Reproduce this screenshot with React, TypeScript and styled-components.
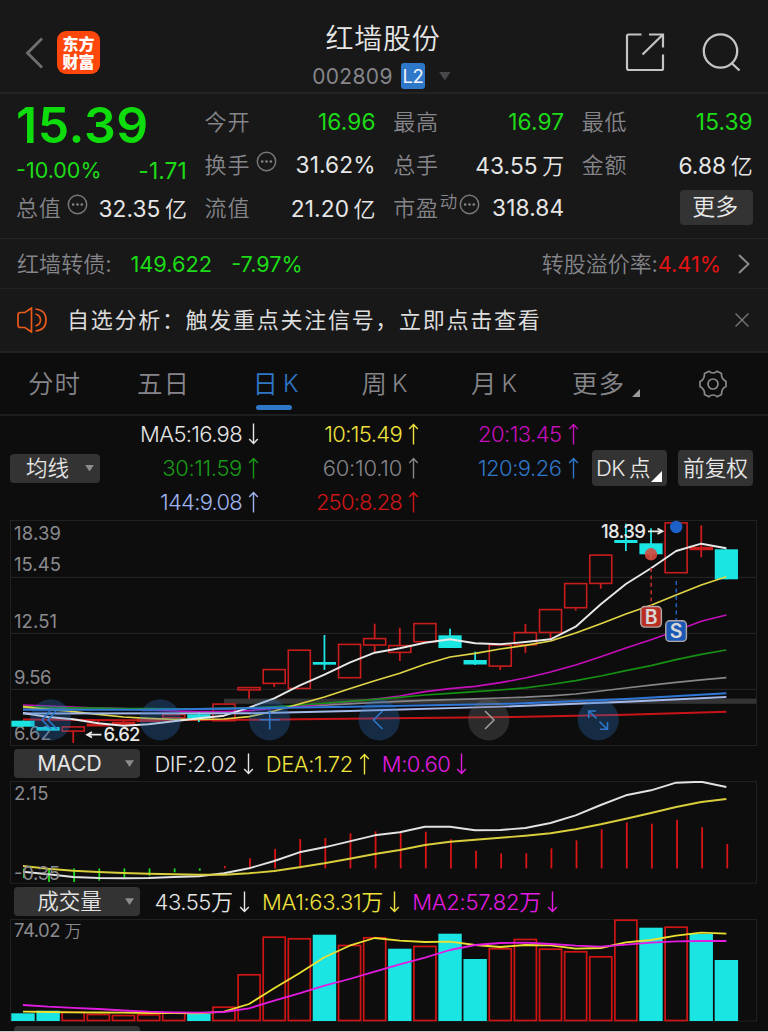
import React from "react";
import styled, { createGlobalStyle } from "styled-components";

const GlobalStyle = createGlobalStyle`
  * { box-sizing: border-box; }
  body {
    margin: 0;
    background: #0d0d0d;
    font-family: Inter, "Noto Sans CJK SC", sans-serif;
    -webkit-font-smoothing: antialiased;
  }
`;

const c = {
  panel: "#181818",
  ink: "#0d0d0d",
  line: "#262626",
  green: "#1ddb17",
  white: "#e6e6e6",
  label: "#85858a",
  blue: "#2f77c8",
  red: "#e31414",
  yellow: "#efe23c",
  magenta: "#c40fba",
  pink: "#e31be0",
  cyan: "#1ae5e3",
  chip: "#333333",
};

const Screen = styled.main`
  display: flex;
  flex-direction: column;
  width: 768px;
  height: 1032px;
  overflow: hidden;
  background: ${c.ink};
  border-bottom: 1px solid #cfc8ca;
  white-space: nowrap;
`;

const Txt = styled.span<{ $c?: string; $s?: number; $ls?: number; $w?: number }>`
  color: ${(p) => p.$c ?? c.white};
  font-family: Inter, "Noto Sans CJK SC", sans-serif;
  font-size: ${(p) => p.$s ?? 22}px;
  letter-spacing: ${(p) => p.$ls ?? 0}px;
  font-weight: ${(p) => p.$w ?? 375};
`;

const Cjk = styled(Txt)`
  display: inline-block;
  font-family: "Noto Sans CJK SC", sans-serif;
  font-weight: ${(p) => p.$w ?? 350};
  transform: translateY(-2px);
`;

/* header */
const Header = styled.header`
  display: grid;
  grid-template-columns: 200px 1fr 200px;
  height: 94px;
  flex: none;
  background: ${c.panel};
  border-bottom: 2px solid #232323;
`;
const HeaderLeft = styled.div`
  display: flex;
  align-items: flex-start;
  padding: 31px 0 0 25px;
  gap: 13px;
  svg { margin-top: 6px; }
`;
const Logo = styled.div`
  width: 43px;
  height: 43px;
  padding: 3px 5px 0 5.5px;
  border-radius: 9px;
  background: #ff470c;
  color: #fff;
  font: 800 16px/18px "Noto Sans CJK SC", sans-serif;
  white-space: normal;
`;
const TitleBlock = styled.div`
  display: flex;
  flex-direction: column;
  align-items: center;
  padding: 18px 2px 0 0;
`;
const Title = styled(Cjk)`
  line-height: 42px;
`;
const CodeRow = styled.div`
  display: flex;
  align-items: center;
  height: 32px;
`;
const Level = styled.span`
  width: 24px;
  height: 26px;
  margin: 0 14px 0 8px;
  border-radius: 3px;
  background: ${c.blue};
  color: #f0f4fa;
  font-size: 18.5px;
  line-height: 26px;
  text-align: center;
  letter-spacing: -0.5px;
`;
const CodeInner = styled(CodeRow)`
  margin-right: 3px;
`;
const HeaderRight = styled.div`
  display: flex;
  align-items: flex-start;
  justify-content: flex-end;
  gap: 37px;
  padding: 32px 27px 0 0;
`;

/* quote */
const Quote = styled.section`
  display: grid;
  grid-template-columns: repeat(4, 171px);
  column-gap: 17.6px;
  height: 145px;
  flex: none;
  padding: 7px 0 0 16px;
  background: ${c.panel};
  border-bottom: 1px solid ${c.line};
`;
const QuoteCol = styled.div`
  display: flex;
  flex-direction: column;
`;
const Cell = styled.div`
  display: flex;
  justify-content: space-between;
  align-items: center;
  height: 43px;
  line-height: 43px;
`;
const LabelGroup = styled.span`
  display: flex;
  align-items: center;
  gap: 5.5px;
  svg { margin-bottom: 8px; }
`;
const Super = styled(Cjk)`
  line-height: 30px;
  margin: 0 -3.5px 12px -4.5px;
`;
const Price = styled.div`
  height: 48px;
  line-height: 49px;
  color: #0fdc0c;
  font-size: 50px;
  font-weight: 560;
  letter-spacing: 0.6px;
`;
const ChangeRow = styled(Cell)`
  height: 38px;
  padding-top: 5px;
`;
const MoreButton = styled.button`
  width: 73px;
  height: 35px;
  margin-left: auto;
  padding: 0 2px 0 0;
  border: 0;
  border-radius: 4px;
  background: ${c.chip};
  color: #e8e8e8;
  font: 350 23px/30px "Noto Sans CJK SC", sans-serif;
  span { display: block; height: 35px; }
`;
const MoreCell = styled(Cell)`
  align-items: flex-start;
  padding-top: 3px;
`;

/* strips */
const Strip = styled.section<{ $h: number; $b?: number }>`
  display: flex;
  align-items: center;
  flex: none;
  height: ${(p) => p.$h}px;
  padding: 0 17px;
  background: ${c.panel};
  border-bottom: ${(p) => p.$b ?? 1}px solid #222;
`;
const Push = styled.span`
  display: flex;
  align-items: center;
  margin-left: auto;
`;
const BondValue = styled(Txt)`
  margin-left: 19px;
`;

/* tabs */
const Tabs = styled.nav`
  display: flex;
  flex: none;
  height: 63px;
  border-bottom: 2px solid #1e1e1e;
`;
const Tab = styled.div<{ $w: number; $active?: boolean }>`
  position: relative;
  width: ${(p) => p.$w}px;
  padding-bottom: 4px;
  display: flex;
  align-items: center;
  justify-content: center;
  gap: 4px;
  color: ${(p) => (p.$active ? c.blue : c.label)};
  font: 350 25.5px/57px "Noto Sans CJK SC", sans-serif;
  letter-spacing: 1px;
  svg { margin-top: 4px; }
  &::after {
    content: "";
    display: ${(p) => (p.$active ? "block" : "none")};
    position: absolute;
    left: calc(50% - 19.5px);
    bottom: 4px;
    width: 36px;
    height: 5px;
    border-radius: 2.5px;
    background: ${c.blue};
  }
`;
const TabLatin = styled.span`
  margin-top: 4px;
  font: 350 24px Inter, sans-serif;
  letter-spacing: 0;
`;
const Corner = styled.i<{ $s: number; $c: string }>`
  width: ${(p) => p.$s}px;
  height: ${(p) => p.$s}px;
  background: ${(p) => p.$c};
  clip-path: polygon(100% 0, 100% 100%, 0 100%);
`;
const TabCorner = styled(Corner)`
  margin: 23px 0 0 3px;
`;

/* moving average legend */
const Legend = styled.section`
  display: flex;
  align-items: center;
  flex: none;
  height: 104px;
  padding: 0 15px 0 10px;
`;
const Picker = styled.div<{ $w: number }>`
  display: flex;
  align-items: center;
  width: ${(p) => p.$w}px;
  height: 29px;
  padding-right: 6px;
  border-radius: 4px;
  background: ${c.chip};
  span { flex: 1; text-align: center; line-height: 29px; }
`;
const Down = styled.i<{ $w: number; $c: string }>`
  width: ${(p) => p.$w}px;
  height: ${(p) => p.$w * 0.75}px;
  background: ${(p) => p.$c};
  clip-path: polygon(0 0, 100% 0, 50% 100%);
`;
const Averages = styled.div`
  display: grid;
  grid-template-columns: 159px 160px 159.5px;
  grid-auto-rows: 34px;
  align-items: center;
  justify-items: end;
  height: 102px;
`;
const Reading = styled.span<{ $c: string }>`
  display: flex;
  align-items: center;
  gap: 6px;
  color: ${(p) => p.$c};
`;
const Actions = styled.div`
  display: flex;
  gap: 11px;
  margin-left: auto;
`;
const Action = styled.button`
  position: relative;
  display: flex;
  align-items: center;
  justify-content: center;
  gap: 4px;
  width: 75px;
  height: 36px;
  padding: 0;
  border: 0;
  border-radius: 4px;
  background: ${c.chip};
`;
const ToggleAction = styled(Action)`
  justify-content: flex-start;
  padding-left: 4px;
  i { position: absolute; right: 5px; bottom: 4px; }
`;

const IndicatorBar = styled.div<{ $h: number }>`
  display: flex;
  align-items: center;
  flex: none;
  height: ${(p) => p.$h}px;
  padding-left: 14px;
`;
const Readings = styled.div`
  display: flex;
  align-items: center;
  gap: 12px;
  margin-left: 14.5px;
`;
const Canvas = styled.svg`
  display: block;
  flex: none;
`;
const PeekBar = styled.div`
  display: flex;
  flex: none;
  height: 10px;
  padding: 4px 0 0 14px;
  &::before {
    content: "";
    width: 126px;
    height: 6px;
    border-radius: 4px 4px 0 0;
    background: ${c.chip};
  }
`;

const Dots = () => (
  <svg width="21" height="21" viewBox="0 0 21 21" fill="none" stroke="#77777b">
    <circle cx="10.5" cy="10.5" r="9.2" strokeWidth="1.5" />
    <g fill="#85858a" stroke="none">
      <circle cx="6.2" cy="10.5" r="1.3" />
      <circle cx="10.5" cy="10.5" r="1.3" />
      <circle cx="14.8" cy="10.5" r="1.3" />
    </g>
  </svg>
);

const Arrow = ({ up }: { up?: boolean }) => (
  <svg width="11" height="22" viewBox="0 0 11 22" fill="none" stroke="currentColor" strokeWidth="1.4">
    <path d={up ? "M5.5 21.5V1.500M1.200 6L5.500 1.500L9.800 6" : "M5.5 0.500V20.500M1.200 16L5.500 20.500L9.800 16"} />
  </svg>
);

const ValueUnit = styled(Cjk)`
  line-height: 24px;
  transform: translateY(-0.5px);
`;

type ValueProps = { color: string; up?: boolean; ls?: number; unit?: string; children: React.ReactNode };
const Value = ({ color, up, ls, unit, children }: ValueProps) => (
  <Reading $c={color}>
    <span>
      <Txt $c={color} $s={22} $ls={ls ?? -0.65} $w={350}>{children}</Txt>
      {unit && <ValueUnit $c={color} $s={22}>{unit}</ValueUnit>}
    </span>
    <Arrow up={up} />
  </Reading>
);

/* chart data, one entry per trading day */
const STEP = 25.12;
const dayX = (i: number) => 23 + STEP * i;

type Candle = [up: boolean, top: number, bottom: number, high: number, low: number];
const candles: Candle[] = [
  [false, 720.7, 726.7, 720.7, 726.7],
  [false, 727, 730.7, 727, 730.7],
  [true, 726.3, 731.7, 726.3, 743],
  [true, 723.7, 726.3, 721, 726.3],
  [true, 722, 725, 720.7, 725],
  [true, 719, 721.7, 719, 721.7],
  [true, 714, 718.3, 714, 718.3],
  [false, 714.3, 718.3, 711.7, 722],
  [true, 703.5, 721.3, 703.5, 721.3],
  [true, 687, 690.5, 687, 698.7],
  [true, 669, 684, 669, 687],
  [true, 649.6, 689, 649.6, 689],
  [false, 662, 664.7, 635, 670],
  [true, 643.8, 678.3, 643.8, 678.3],
  [true, 638, 645.6, 623.7, 652],
  [true, 645, 653, 627.7, 661],
  [true, 623, 642.3, 623, 642.3],
  [false, 635.3, 648, 628.7, 648],
  [false, 660, 664.5, 651.7, 665],
  [true, 644.4, 666.7, 644.4, 670],
  [true, 632, 645.5, 624, 653],
  [true, 609, 633, 609, 638.3],
  [true, 583, 608.3, 583, 610.7],
  [true, 554.5, 584, 554.5, 588.7],
  [false, 540, 543, 523.7, 551],
  [false, 543.3, 554.3, 528.3, 559],
  [true, 522.3, 573.3, 522.3, 573.3],
  [true, 547, 550, 525.3, 557.3],
  [false, 549.3, 579.3, 549.3, 579.3],
];

const ma5 = [713, 717, 719.3, 723.3, 725.7, 724.3, 721.3, 718.3, 715.7, 707.7, 698.3, 685.7, 674.7, 662.7, 652.7, 648.3, 642.7, 639.3, 643.3, 644.3, 642, 639.3, 626.7, 604.3, 584, 568.3, 551, 543.7, 548.3];
const ma10 = [706.7, 709.3, 711.7, 714.3, 717, 718.3, 719.3, 719.3, 719, 716.7, 711, 704, 697, 688.7, 680.7, 673.3, 664.3, 657, 653.3, 649, 645.3, 641, 633, 623.7, 614, 605.3, 595, 585, 576.7];
const ma20 = [705, 706, 707, 708, 708.7, 710, 711, 711.7, 711.7, 710.7, 708.3, 706.3, 704, 701.7, 699, 696, 691.7, 688.7, 686.3, 682.7, 678, 672, 665, 656.7, 648, 639.7, 630.7, 621.3, 615];
const ma30 = [706.7, 707.3, 707.8, 708.2, 708.5, 708.7, 708.8, 708.8, 708.5, 708, 706.8, 705, 703.3, 701.4, 699.4, 697.4, 695, 693.4, 691.7, 690, 687.8, 684.5, 680.7, 676, 670.7, 665.7, 659.7, 654.3, 650];
const ma60 = [707.7, 708, 708.3, 708.6, 708.8, 709, 709, 708.9, 708.6, 708.2, 707.4, 706.4, 705.2, 703.8, 702.5, 701.4, 700.4, 699.6, 698.8, 698, 697.2, 695.8, 694, 691, 688, 685.2, 682.3, 679.8, 677.7];

type Sparse = [number, number][];
const ma120: Sparse = [[0, 709.7], [5, 709.7], [9, 708.3], [13, 706.7], [19.5, 703.7], [24, 699], [28, 693.3]];
const ma144: Sparse = [[0, 713.5], [9, 713.3], [13, 711], [19.5, 706.3], [24, 701.7], [28, 697]];
const ma250: Sparse = [[0, 719.5], [4, 720.3], [9, 719.7], [19.5, 717], [24, 714.7], [28, 711.7]];

const dif = [871.7, 874.3, 877, 878, 878.3, 878, 877, 876.3, 873.3, 868.3, 861, 852.3, 847.3, 841.3, 835.3, 832.3, 826.7, 826.7, 830.3, 830, 828, 823, 815.3, 805, 795.3, 790.3, 782.7, 781.7, 787];
const dea = [866, 868.7, 870.7, 872, 873, 873.7, 874.3, 874.7, 874.7, 873.3, 871, 867.3, 863.3, 858.7, 854, 850, 845, 841.7, 839.7, 837.7, 835.7, 833.3, 829.3, 824.3, 818.7, 813, 807, 802, 799];
const histogram = [878, 882, 882, 880.7, 877.7, 875.7, 872.3, 870.7, 866, 858.3, 849, 839, 838, 833.3, 831.3, 833, 831.7, 839.3, 850.7, 853.3, 853.3, 848.3, 840.3, 829.3, 822.3, 823.7, 819.7, 827.3, 844];

const volume = [1013.3, 1010.7, 1011.7, 1014, 1015, 1014.3, 1012.3, 1013.7, 1006.7, 974.3, 936.7, 938.3, 934.7, 945, 937.3, 948.7, 946, 933.7, 959, 948.3, 939, 948.7, 951.3, 956.3, 919.7, 927.7, 926.7, 934, 960];
const fallingVolume = new Set([0, 1, 7, 12, 15, 17, 18, 25, 27, 28]);
const volMa1 = [1011.7, 1012, 1012.3, 1012.5, 1012.7, 1013, 1013.2, 1013.3, 1011.7, 1004, 988.3, 973.3, 957.3, 945.7, 938, 940.7, 942, 941.7, 945, 947, 945, 945.3, 948.7, 948, 942.3, 940, 935.7, 932.7, 933.7];
const volMa2 = [1005, 1006.7, 1007.8, 1009, 1010.5, 1011.7, 1012.3, 1012.7, 1012, 1008.3, 1000.7, 993.3, 985.7, 979, 971.7, 964.3, 957.7, 950, 945, 943, 942.7, 944, 945.7, 946.7, 944.7, 942.7, 941.3, 941, 941];

const Line = ({ data, color, w = 1.7 }: { data: number[] | Sparse; color: string; w?: number }) => (
  <polyline
    fill="none"
    stroke={color}
    strokeWidth={w}
    strokeLinejoin="round"
    points={data.map((d, i) => (typeof d === "number" ? `${dayX(i)},${d}` : `${dayX(d[0])},${d[1]}`)).join(" ")}
  />
);

const Frame = ({ top, bottom }: { top: number; bottom: number }) => (
  <rect x="10.5" y={top} width="746" height={bottom - top} fill="none" stroke="#212121" />
);

const Scale = ({ y, w, children, x = 14 }: { y: number; w: number; x?: number; children: React.ReactNode }) => (
  <text x={x} y={y} fontSize="18.5" fill="#8a8a8e" textLength={w}>{children}</text>
);

const PriceChart = () => (
  <Canvas width="768" height="226" viewBox="0 520 768 226">
    <Frame top={520.5} bottom={745.5} />
    <path d="M11 577.3H756M11 633.3H756M11 689.3H756" stroke="#222" strokeWidth="1.3" />
    <rect x="224" y="698.6" width="532.5" height="5.2" fill="#343434" />
    <Scale y={540} w={47}>18.39</Scale>
    <Scale y={571} w={47}>15.45</Scale>
    <Scale y={627.5} w={43}>12.51</Scale>
    <Scale y={684} w={37.5}>9.56</Scale>
    <Scale y={740} w={37.5}>6.62</Scale>
    <Line data={ma250} color="#c81418" w={2} />
    {candles.map(([up, top, bottom, high, low], i) => {
      const x = dayX(i);
      const flat = bottom - top < 3.2;
      return up ? (
        <g key={i} stroke="#c91d1d" strokeWidth="1.6" fill="none">
          <path d={`M${x} ${high}V${top}M${x} ${bottom}V${low}`} strokeWidth="1.8" />
          <rect x={x - 11} y={top + 0.6} width="22" height={Math.max(bottom - top - 1.2, 1)} fill={flat ? "#c91d1d" : "none"} />
        </g>
      ) : (
        <g key={i} fill={c.cyan}>
          <rect x={x - 0.9} y={high} width="1.8" height={low - high} />
          <rect x={x - 11.6} y={top} width="23.2" height={bottom - top} />
        </g>
      );
    })}
    <Line data={ma60} color="#85858a" />
    <Line data={ma20} color={c.magenta} />
    <Line data={ma30} color="#159014" />
    <Line data={ma10} color="#e0d545" />
    <Line data={ma5} color="#e8e8e8" w={1.9} />
    <Line data={ma144} color="#a5b8ea" w={1.9} />
    <Line data={ma120} color="#2f77d8" w={2.1} />

    {[50.7, 160.2, 269.7, 379.2, 488.7, 598.2].map((x, i) => (
      <circle key={x} cx={x} cy="719.8" r="20.6" fill={i === 4 ? "#707070" : "#2b74c4"} fillOpacity="0.3" />
    ))}
    <g fill="none" stroke={c.blue} strokeWidth="1.6">
      <path d="M50 711L42 720L51 729M56 711L48 720L57 729" />
      <path d="M259.7 719.7H279.7M269.7 710V729.5" />
      <path d="M382.5 711L373.5 720L382.5 729" />
      <path d="M485 711L494 720L485 729" stroke="#9a9a9a" />
      <path d="M588.7 718V711H596M589 711L596.5 718.5M607.5 722V729.3H600M607 729L599.5 721.5" />
    </g>

    <g fill="none" stroke="#e8e8e8" strokeWidth="1.7">
      <path d="M87 734.7H101.5M92 732L87 734.7L92 737.4" />
      <path d="M648 531.3H662M657.5 528.6L662.5 531.3L657.5 534" />
    </g>
    <text x="103.5" y="741.3" fontSize="18.5" fontWeight="500" fill="#e8e8e8" textLength="37">6.62</text>
    <text x="601" y="538" fontSize="18.5" fontWeight="500" fill="#e8e8e8" textLength="45">18.39</text>

    <circle cx="651" cy="554.3" r="6.2" fill="#d8483c" fillOpacity="0.9" />
    <circle cx="676.2" cy="527" r="6.2" fill="#1c60c8" />
    <path d="M651.2 568V606" stroke="#c83028" strokeWidth="1.5" strokeDasharray="4 3.4" />
    <path d="M676.3 581V620" stroke="#2060c0" strokeWidth="1.5" strokeDasharray="4 3.4" />
    <g stroke="#b4a8a8" strokeWidth="1.4">
      <rect x="640.8" y="606.5" width="20.6" height="20.6" rx="4" fill="#b92f24" />
      <rect x="665.8" y="620.8" width="20.6" height="20.6" rx="4" fill="#1b58b5" />
    </g>
    <g fontSize="19.5" fontWeight="600" fill="#d8d8d8" textAnchor="middle">
      <text x="651.3" y="623.8">B</text>
      <text x="676.1" y="638.1">S</text>
    </g>
  </Canvas>
);

const MacdChart = () => (
  <Canvas width="768" height="103" viewBox="0 781 768 103">
    <Frame top={781.5} bottom={883.3} />
    {histogram.map((y, i) => (
      <path key={i} d={`M${dayX(i) + 0.9} 868.4V${y}`} stroke={y > 868.4 ? "#1fdc1f" : "#d91414"} strokeWidth="1.8" />
    ))}
    <Line data={dif} color="#e2e2e2" w={1.9} />
    <Line data={dea} color="#d9ce3c" w={1.9} />
    <Scale y={799.5} w={34.5}>2.15</Scale>
    <Scale y={879.5} w={46}>-0.35</Scale>
  </Canvas>
);

const VolumeChart = () => (
  <Canvas width="768" height="103" viewBox="0 919 768 103">
    <Frame top={919.5} bottom={1021} />
    <text x="14" y="937" fontSize="18.5" fill="#8a8a8e" textLength="46.5">74.02</text>
    <text x="64.5" y="936.5" fontSize="17" fontWeight="350" fill="#8a8a8e">万</text>
    {volume.map((y, i) =>
      fallingVolume.has(i) ? (
        <rect key={i} x={dayX(i) - 11.7} y={y} width="23.4" height={1021 - y} fill={c.cyan} />
      ) : (
        <rect key={i} x={dayX(i) - 11} y={y + 0.5} width="22" height={1020 - y} fill="none" stroke="#d01414" strokeWidth="1.7" />
      ),
    )}
    <Line data={volMa1} color="#ebe032" w={1.8} />
    <Line data={volMa2} color={c.pink} w={1.8} />
  </Canvas>
);

type QuoteItem = { label: string; value: string; unit?: string; color?: string; info?: boolean };
const quoteCols: QuoteItem[][] = [
  [
    { label: "今开", value: "16.96", color: c.green },
    { label: "换手", value: "31.62%", info: true },
    { label: "流值", value: "21.20", unit: "亿" },
  ],
  [
    { label: "最高", value: "16.97", color: c.green },
    { label: "总手", value: "43.55", unit: "万" },
  ],
  [
    { label: "最低", value: "15.39", color: c.green },
    { label: "金额", value: "6.88", unit: "亿" },
  ],
];

const UnitText = styled(Cjk)`
  margin-left: 4.5px;
  transform: translateY(-0.5px);
`;

const AmountBox = styled.span`
  padding-top: 1px;
`;

const Amount = ({ value, unit, color }: { value: string; unit?: string; color?: string }) => (
  <AmountBox>
    <Txt $s={22.7} $c={color} $ls={0.1}>{value}</Txt>
    {unit && <UnitText $s={22} $c={color}>{unit}</UnitText>}
  </AmountBox>
);

const QuoteCell = ({ label, value, unit, color, info }: QuoteItem) => (
  <Cell>
    <LabelGroup>
      <Cjk $c={c.label} $s={22} $ls={0.8}>{label}</Cjk>
      {info && <Dots />}
    </LabelGroup>
    <Amount value={value} unit={unit} color={color} />
  </Cell>
);

export default function App() {
  return (
    <Screen>
      <GlobalStyle />
      <Header>
        <HeaderLeft>
          <svg width="19" height="32" viewBox="0 0 19 32" fill="none" stroke="#6f6f71" strokeWidth="2.8">
            <path d="M17 1.5L2.5 16L17 30.5" />
          </svg>
          <Logo>东方财富</Logo>
        </HeaderLeft>
        <TitleBlock>
          <Title $s={28} $ls={0.7}>红墙股份</Title>
          <CodeInner>
            <Txt $c={c.label} $s={21} $ls={0.35}>002809</Txt>
            <Level>L2</Level>
            <Down $w={12} $c="#48484a" />
          </CodeInner>
        </TitleBlock>
        <HeaderRight>
          <svg width="40" height="40" viewBox="0 0 40 40" fill="none" stroke="#c4c4c6" strokeWidth="2.2">
            <path d="M16.5 2.500H3.5Q2 2.500 2 4V36Q2 38 4 38H36.5Q38 38 38 36.500V22.500M24 2.500H38V15.500M38 2.500L17.5 22.500" />
          </svg>
          <svg width="39" height="40" viewBox="0 0 39 40" fill="none" stroke="#c4c4c6" strokeWidth="2.3">
            <circle cx="18.5" cy="19" r="16.7" />
            <path d="M29 30.5L37.5 38.5" />
          </svg>
        </HeaderRight>
      </Header>

      <Quote>
        <QuoteCol>
          <Price>15.39</Price>
          <ChangeRow>
            <Txt $c={c.green} $s={21.5}>-10.00%</Txt>
            <Txt $c={c.green} $s={22.8} $ls={0.1}>-1.71</Txt>
          </ChangeRow>
          <QuoteCell label="总值" value="32.35" unit="亿" info />
        </QuoteCol>
        {quoteCols.map((col, i) => (
          <QuoteCol key={i}>
            {col.map((item) => <QuoteCell key={item.label} {...item} />)}
            {i === 1 && (
              <Cell>
                <LabelGroup>
                  <Cjk $c={c.label} $s={22} $ls={0.8}>市盈</Cjk>
                  <Super $c={c.label} $s={17.5}>动</Super>
                  <Dots />
                </LabelGroup>
                <Amount value="318.84" />
              </Cell>
            )}
            {i === 2 && <MoreCell><MoreButton><span>更多</span></MoreButton></MoreCell>}
          </QuoteCol>
        ))}
      </Quote>

      <Strip $h={50}>
        <Cjk $c={c.label} $s={22} $ls={0.1}>红墙转债:</Cjk>
        <BondValue $c={c.green} $s={21.8}>149.622</BondValue>
        <BondValue $c={c.green} $s={21.6}>-7.97%</BondValue>
        <Push>
          <Cjk $c={c.label} $s={22}>转股溢价率:</Cjk>
          <Txt $c={c.red} $s={21.7}>4.41%</Txt>
        </Push>
        <svg width="30" height="20" viewBox="1 0 30 20" fill="none" stroke="#929296" strokeWidth="1.8">
          <path d="M19 1L28.5 10L19 19" />
        </svg>
      </Strip>

      <Strip $h={64} $b={2}>
        <svg width="50" height="26" viewBox="0 0 50 26" fill="none" stroke="#e8591c" strokeWidth="1.7">
          <path d="M14.5 1V25L8 20.5H3.5Q1 20.5 1 18V8Q1 5.500 3.500 5.500H8ZM18.500 7Q23.500 8.500 23.500 13T18.500 19M18.500 2Q29 3 29 13T18.500 24" />
        </svg>
        <Cjk $c="#dcdcdc" $s={22} $ls={1.72} $w={370}>自选分析：触发重点关注信号，立即点击查看</Cjk>
        <Push />
        <svg width="17" height="16" viewBox="0 0 17 16" stroke="#77777a" strokeWidth="1.4">
          <path d="M1.500 1.500L14.500 14.500M14.500 1.500L1.500 14.500" />
        </svg>
      </Strip>

      <Tabs>
        <Tab $w={109}>分时</Tab>
        <Tab $w={109}>五日</Tab>
        <Tab $w={115} $active>日<TabLatin>K</TabLatin></Tab>
        <Tab $w={103}>周<TabLatin>K</TabLatin></Tab>
        <Tab $w={116}>月<TabLatin>K</TabLatin></Tab>
        <Tab $w={108}>更多<TabCorner $s={8} $c="#9a9a9c" /></Tab>
        <Tab $w={105}>
          <svg width="30" height="30" viewBox="0 0 30 30" fill="none" stroke="#8a8a8e" strokeWidth="1.7">
            <path d="M11 2.200Q12.500 4 15 4T19 2.200L23.500 4.500Q23.200 7.200 24.300 9T28 12.500V17.500Q25.200 18.500 24.300 21T23.500 25.500L19 27.800Q17.500 26 15 26T11 27.800L6.500 25.500Q6.800 22.800 5.700 21T2 17.500V12.500Q4.800 11.500 5.700 9T6.500 4.500Z" strokeLinejoin="round" />
            <circle cx="15" cy="15" r="5" />
          </svg>
        </Tab>
      </Tabs>

      <Legend>
        <Picker $w={90}><Cjk $c="#e4e4e4" $s={21.5}>均线</Cjk><Down $w={9} $c="#8d8d90" /></Picker>
        <Averages>
          <Value color="#e6e6e6">MA5:16.98</Value>
          <Value color={c.yellow} up>10:15.49</Value>
          <Value color={c.magenta} up ls={-0.55}>20:13.45</Value>
          <Value color="#189a16" up ls={-0.35}>30:11.59</Value>
          <Value color="#85858a" up ls={-0.25}>60:10.10</Value>
          <Value color={c.blue} up ls={-0.5}>120:9.26</Value>
          <Value color="#9fb4ee" up ls={-0.75}>144:9.08</Value>
          <Value color="#cf1616" up ls={-0.8}>250:8.28</Value>
        </Averages>
        <Actions>
          <ToggleAction>
            <Txt $s={22} $ls={-0.5} $w={350}>DK</Txt>
            <Cjk $s={21.5}>点</Cjk>
            <Corner $s={11} $c="#fff" />
          </ToggleAction>
          <Action><Cjk $s={21.7}>前复权</Cjk></Action>
        </Actions>
      </Legend>

      <PriceChart />
      <IndicatorBar $h={35}>
        <Picker $w={126}><Txt $c="#e4e4e4" $s={21.5}>MACD</Txt><Down $w={9} $c="#8d8d90" /></Picker>
        <Readings>
          <Value color="#e6e6e6" ls={-0.6}>DIF:2.02</Value>
          <Value color={c.yellow} up ls={-0.4}>DEA:1.72</Value>
          <Value color={c.pink} ls={-0.5}>M:0.60</Value>
        </Readings>
      </IndicatorBar>
      <MacdChart />
      <IndicatorBar $h={35}>
        <Picker $w={126}><Cjk $c="#e4e4e4" $s={21.5}>成交量</Cjk><Down $w={9} $c="#8d8d90" /></Picker>
        <Readings>
          <Value color="#e6e6e6" ls={-0.45} unit="万">43.55</Value>
          <Value color={c.yellow} ls={-0.35} unit="万">MA1:63.31</Value>
          <Value color={c.pink} ls={-0.3} unit="万">MA2:57.82</Value>
        </Readings>
      </IndicatorBar>
      <VolumeChart />
      <PeekBar />
    </Screen>
  );
}
